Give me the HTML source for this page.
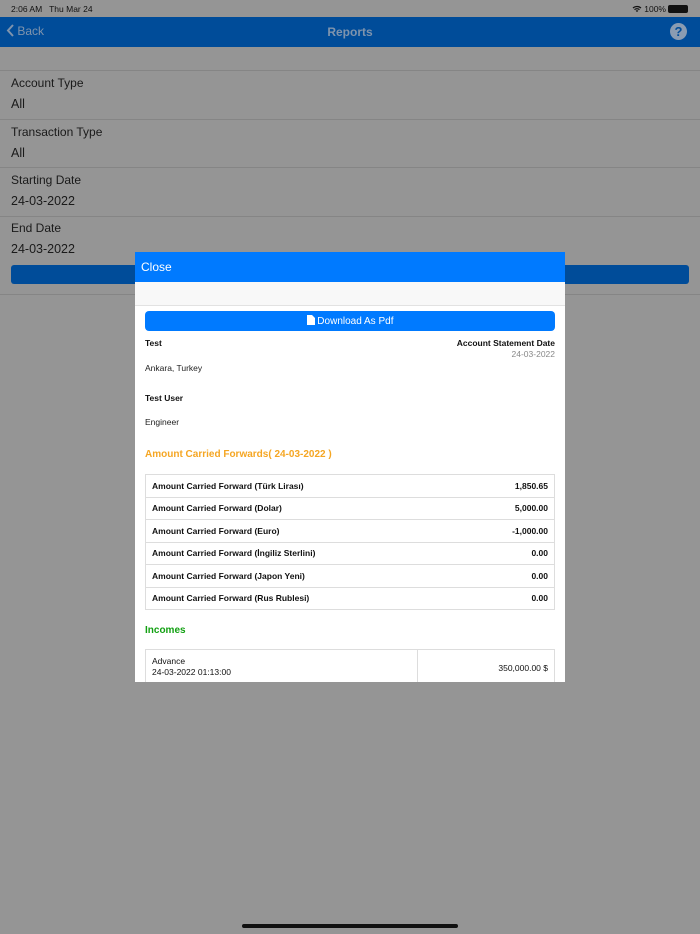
<!DOCTYPE html>
<html><head><meta charset="utf-8"><style>
*{margin:0;padding:0;box-sizing:border-box}
body{width:700px;height:934px;background:#959595;font-family:"Liberation Sans",Arial,sans-serif;position:relative;overflow:hidden;color:#111}
.abs{position:absolute}
.line{position:absolute;left:0;width:700px;height:1px;background:#858585}
.lbl{position:absolute;left:11px;font-size:12px;color:#1a1a1a}
.val{position:absolute;left:11px;font-size:12.5px;color:#1a1a1a}
.modal{position:absolute;left:135px;top:252px;width:430px;height:430px;background:#fff;overflow:hidden}
table{border-collapse:collapse}
.cf td{border-top:1px solid #ddd;border-bottom:1px solid #ddd;font-size:8.5px;font-weight:bold;height:22.5px;padding:0 6px}
.cf td:first-child{border-left:1px solid #ddd}
.cf td:last-child{border-right:1px solid #ddd}
</style></head><body>
<div class="abs" style="left:11px;top:4px;font-size:8.5px;color:#111">2:06 AM&nbsp;&nbsp; Thu Mar 24</div>
<div class="abs" style="right:34px;top:4px;font-size:8.5px;color:#111">
<svg width="10" height="8" viewBox="0 0 10 8" style="vertical-align:-1px"><path d="M1 3a6 6 0 0 1 8 0M2.5 4.6a4 4 0 0 1 5 0M4 6.2a2 2 0 0 1 2 0" stroke="#111" stroke-width="1.2" fill="none"/></svg> 100%</div>
<div class="abs" style="left:668px;top:5px;width:20px;height:8px;border-radius:2px;background:#111"></div>
<div class="abs" style="left:0;top:17px;width:700px;height:30px;background:#004c99"></div>
<div class="abs" style="left:6px;top:24px;font-size:12px;color:#7f94ad"><svg width="8" height="13" viewBox="0 0 8 13" style="vertical-align:-2px"><path d="M7 1L2 6.5 7 12" stroke="#7f94ad" stroke-width="2" fill="none"/></svg> Back</div>
<div class="abs" style="left:0;width:700px;top:25px;text-align:center;font-size:12px;color:#7f94ad;font-weight:bold">Reports</div>
<div class="abs" style="left:670px;top:23px;width:17px;height:17px;border-radius:50%;background:#8a9cb2;color:#004c99;font-size:13px;font-weight:bold;text-align:center;line-height:17px">?</div>
<div class="line" style="top:70px"></div>
<div class="lbl" style="top:76px">Account Type</div><div class="val" style="top:97px">All</div>
<div class="line" style="top:119px"></div>
<div class="lbl" style="top:125px">Transaction Type</div><div class="val" style="top:146px">All</div>
<div class="line" style="top:167px"></div>
<div class="lbl" style="top:173px">Starting Date</div><div class="val" style="top:194px">24-03-2022</div>
<div class="line" style="top:216px"></div>
<div class="lbl" style="top:221px">End Date</div><div class="val" style="top:242px">24-03-2022</div>
<div class="abs" style="left:11px;top:265px;width:678px;height:19px;border-radius:3px;background:#004c99"></div>
<div class="line" style="top:294px"></div>
<div class="modal">
<div style="height:30px;background:#007aff;color:#fff;font-size:12px;padding:8px 6px">Close</div>
<div style="height:24px;background:#f8f8f8;border-bottom:1px solid #e2e2e2"></div>
<div style="margin:5px 10px 0;height:20px;border-radius:4px;background:#007aff;color:#fff;font-size:10px;text-align:center;line-height:21px"><svg width="8" height="10" viewBox="0 0 8 10" style="vertical-align:-1px"><path d="M0 0h5l3 3v7H0z" fill="#fff"/></svg> Download As Pdf</div>
<div style="position:relative;height:120px;font-size:8.5px">
<div class="abs" style="left:10px;top:7px;font-weight:bold">Test</div>
<div class="abs" style="right:10px;top:7px;font-weight:bold">Account Statement Date</div>
<div class="abs" style="right:10px;top:18px;color:#888">24-03-2022</div>
<div class="abs" style="left:10px;top:32px;color:#222">Ankara, Turkey</div>
<div class="abs" style="left:10px;top:62px;font-weight:bold">Test User</div>
<div class="abs" style="left:10px;top:86px;color:#222">Engineer</div>
<div class="abs" style="left:10px;top:118px;color:#f5a623;font-weight:bold;font-size:10px">Amount Carried Forwards( 24-03-2022 )</div>
</div>
<table class="cf" style="position:absolute;left:10px;top:222px;width:410px">
<tr><td>Amount Carried Forward (Türk Lirası)</td><td style="text-align:right">1,850.65</td></tr>
<tr><td>Amount Carried Forward (Dolar)</td><td style="text-align:right">5,000.00</td></tr>
<tr><td>Amount Carried Forward (Euro)</td><td style="text-align:right">-1,000.00</td></tr>
<tr><td>Amount Carried Forward (İngiliz Sterlini)</td><td style="text-align:right">0.00</td></tr>
<tr><td>Amount Carried Forward (Japon Yeni)</td><td style="text-align:right">0.00</td></tr>
<tr><td>Amount Carried Forward (Rus Rublesi)</td><td style="text-align:right">0.00</td></tr>
</table>
<div class="abs" style="left:10px;top:373px;color:#12a012;font-weight:bold;font-size:10px">Incomes</div>
<table style="position:absolute;left:10px;top:397px;width:410px;font-size:8.5px">
<tr><td style="border:1px solid #ddd;width:272px;padding:6px;height:36px;vertical-align:top;line-height:11px">Advance<br>24-03-2022 01:13:00</td><td style="border:1px solid #ddd;text-align:right;padding:0 6px">350,000.00 $</td></tr>
</table>
</div>
<div class="abs" style="left:242px;top:924px;width:216px;height:4px;border-radius:2px;background:#111"></div>
</body></html>
